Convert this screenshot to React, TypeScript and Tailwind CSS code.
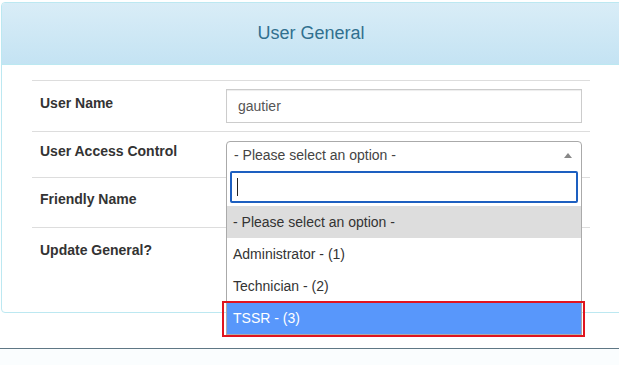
import React from 'react'

const OPTIONS = [
  { label: '- Please select an option -', state: 'hover' },
  { label: 'Administrator - (1)', state: 'none' },
  { label: 'Technician - (2)', state: 'none' },
  { label: 'TSSR - (3)', state: 'selected' },
]

function Row({ label, h, pt, children }: { label: string; h: string; pt: string; children?: React.ReactNode }) {
  return (
    <div className={`flex border-t border-[#dddddd] ${h}`}>
      <div className={`w-[194px] pl-[8px] ${pt} text-[14px] leading-[20px] font-bold text-[#333333]`}>{label}</div>
      <div className="flex-1 pr-[8px]">{children}</div>
    </div>
  )
}

export default function App() {
  return (
    <div className="relative w-[619px] h-[365px] overflow-hidden bg-white font-['Liberation_Sans',Arial,sans-serif]">
      <div className="pt-[2px] pl-[1px]">
        <div className="w-[640px] h-[311px] border border-[#bce8f1] rounded-[4px] overflow-hidden bg-white">
          {/* header */}
          <div className="h-[62px] flex items-center justify-center pr-[20px] bg-gradient-to-b from-[#d9edf7] to-[#c4e3f3] border-b border-[#bce8f1]">
            <span className="text-[18px] text-[#31708f]">User General</span>
          </div>

          {/* body */}
          <div className="pt-[15px] pl-[30px]">
            <div className="w-[558px]">
              <Row label="User Name" h="h-[51px]" pt="pt-[12px]">
                <div className="mt-[8px] h-[34px] border border-[#cccccc] flex items-center px-[11px] text-[14px] text-[#555555] shadow-[inset_0_1px_1px_rgba(0,0,0,0.075)]">
                  gautier
                </div>
              </Row>
              <Row label="User Access Control" h="h-[46px]" pt="pt-[9px]">
                <div className="mt-[9px] h-[28px] border border-[#aaaaaa] rounded-t-[4px] flex items-center justify-between pl-[7px] pr-[9px] text-[14px] text-[#444444]">
                  <span>- Please select an option -</span>
                  <span className="w-0 h-0 border-l-[4px] border-r-[4px] border-b-[5px] border-l-transparent border-r-transparent border-b-[#888888]" />
                </div>
              </Row>
              <Row label="Friendly Name" h="h-[50px]" pt="pt-[11px]" />
              <Row label="Update General?" h="h-[86px]" pt="pt-[12px]" />
            </div>
          </div>
        </div>
      </div>

      <div className="mt-[35px] border-t border-[#5f7785] h-[20px] bg-[#fafdfe]" />

      {/* open select dropdown */}
      <div className="absolute left-[226px] top-[168px] w-[356px] bg-white border border-t-0 border-[#aaaaaa]">
        <div className="px-[3px] pt-[3px] pb-[3px]">
          <div className="h-[32px] border-2 border-[#1d5fc0] rounded-[2px] flex items-center pl-[5px]">
            <span className="w-[1px] h-[18px] bg-[#222222]" />
          </div>
        </div>
        {OPTIONS.map((o) => (
          <div
            key={o.label}
            className={`h-[32px] flex items-center pl-[6px] text-[14px] ${
              o.state === 'hover'
                ? 'bg-[#dddddd] text-[#333333]'
                : o.state === 'selected'
                  ? 'bg-[#5897fb] text-white'
                  : 'text-[#333333]'
            }`}
          >
            {o.label}
          </div>
        ))}
      </div>

      {/* annotation */}
      <div className="absolute left-[222px] top-[301px] w-[363px] h-[36px] border-2 border-[#e0141e] pointer-events-none" />
    </div>
  )
}
